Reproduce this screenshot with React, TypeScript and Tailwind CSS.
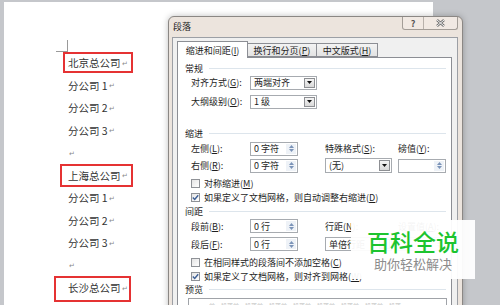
import type { ReactNode } from "react";

const docLines: { t: string; box?: string }[] = [
    { t: "北京总公司", box: "left-[59px] top-0 h-[21px] w-[70px]" },
    { t: "分公司 1" },
    { t: "分公司 2" },
    { t: "分公司 3" },
    { t: "" },
    { t: "上海总公司", box: "left-[56px] top-[-1px] h-[23px] w-[73px]" },
    { t: "分公司 1" },
    { t: "分公司 2" },
    { t: "分公司 3" },
    { t: "" },
    { t: "长沙总公司", box: "left-[50px] top-[-1px] h-[26px] w-[77px]" },
];

const M = ({ k }: { k: string }) => (
    <span>
        (<span className="underline">{k}</span>)
    </span>
);

const Arrow = () => (
    <svg width="5" height="3" viewBox="0 0 5 3">
        <path d="M0 0h5L2.5 3z" fill="#111" />
    </svg>
);

const Combo = ({ text, w = "w-[67px]", h = "h-[14px]" }: { text: string; w?: string; h?: string }) => (
    <div className={`flex ${w} ${h} items-stretch border border-[#a7abb0] bg-white`}>
        <div className="flex flex-1 items-center overflow-hidden whitespace-nowrap pl-[3px]">{text}</div>
        <div className="m-px flex w-[11px] items-center justify-center border border-[#8d8f93] bg-gradient-to-b from-[#f4f4f4] to-[#d9d9d9]">
            <Arrow />
        </div>
    </div>
);

const Spin = ({ text }: { text: string }) => (
    <div className="flex h-[14px] w-[48px] items-stretch border border-[#a7abb0] bg-white">
        <div className="flex flex-1 items-center whitespace-nowrap pl-[3px]">{text}</div>
        <div className="m-px flex w-[10px] flex-col items-center justify-center gap-px bg-[#eef2f7]">
            <svg width="5" height="3" viewBox="0 0 5 3">
                <path d="M0 3h5L2.5 0z" fill="#7b93b8" />
            </svg>
            <svg width="5" height="3" viewBox="0 0 5 3">
                <path d="M0 0h5L2.5 3z" fill="#7b93b8" />
            </svg>
        </div>
    </div>
);

const Check = ({ on, children }: { on?: boolean; children: ReactNode }) => (
    <div className="flex h-[14px] items-center gap-[4px] whitespace-nowrap pl-[6px]">
        <div className="flex h-[9px] w-[9px] items-center justify-center border border-[#8f9297] bg-gradient-to-br from-[#e4e4e4] to-white">
            {on && (
                <svg width="7" height="7" viewBox="0 0 7 7">
                    <path d="M0.8 3.6 2.7 5.5 6.2 1.2" stroke="#3d5f96" strokeWidth="1.4" fill="none" />
                </svg>
            )}
        </div>
        <span>{children}</span>
    </div>
);

const Heading = ({ text, h = "h-[14px]" }: { text: string; h?: string }) => (
    <div className={`flex ${h} items-center gap-[6px] pr-[5px]`}>
        <span>{text}</span>
        <div className="h-px flex-1 bg-[#dde5ec]" />
    </div>
);

const Dialog = () => (
    <div className="absolute left-[168px] top-[16px] flex h-[300px] w-[295px] flex-col rounded-t-[6px] border border-[#8b8784] bg-[#ece4dd] shadow-[0_0_6px_rgba(0,0,0,0.25)]">
        <div className="flex h-[20px] items-start justify-between pl-[4px] pr-[4px]">
            <span className="mt-[5px] text-[9px] text-[#222]">段落</span>
            <div className="flex h-[13px] rounded-b-[3px] border border-t-0 border-[#a39d97] bg-[#f1e9e3]">
                <div className="flex w-[21px] items-center justify-center border-r border-[#b8b1ab] text-[9px] font-bold text-[#555]">
                    ?
                </div>
                <div className="flex w-[33px] items-center justify-center">
                    <svg width="9" height="8" viewBox="0 0 9 8">
                        <path d="M1 1l7 6M8 1 1 7" stroke="#6d6d6d" strokeWidth="2.4" />
                        <path d="M1 1l7 6M8 1 1 7" stroke="#f4f4f4" strokeWidth="1" />
                    </svg>
                </div>
            </div>
        </div>
        <div className="ml-[3px] mr-[4px] flex flex-1 flex-col border border-[#9c9fa5] bg-[#f0f0f0] pl-[4px] pr-[5px] pt-[3px]">
            <div className="flex h-[16px] items-end">
                <div className="relative z-10 -mb-px flex h-[17px] w-[71px] items-center justify-center border border-b-0 border-[#8c8e94] bg-white">
                    缩进和间距<M k="I" />
                </div>
                <div className="flex h-[14px] w-[69px] items-center justify-center border border-l-0 border-[#8c8e94] bg-gradient-to-b from-[#f3f3f3] to-[#e3e3e3]">
                    换行和分页<M k="P" />
                </div>
                <div className="flex h-[14px] w-[61px] items-center justify-center border border-l-0 border-[#8c8e94] bg-gradient-to-b from-[#f3f3f3] to-[#e3e3e3]">
                    中文版式<M k="H" />
                </div>
            </div>
            <div className="flex flex-1 flex-col border border-[#8c8e94] bg-white pl-[7px] pt-[3px]">
                <Heading text="常规" />
                <div className="flex h-[15px] items-center pl-[6px]">
                    <span className="w-[59px]">
                        对齐方式<M k="G" />:
                    </span>
                    <Combo text="两端对齐" />
                </div>
                <div className="mt-[4px] flex h-[15px] items-center pl-[6px]">
                    <span className="w-[59px]">
                        大纲级别<M k="O" />:
                    </span>
                    <Combo text="1 级" />
                </div>
                <div className="mt-[17px]">
                    <Heading text="缩进" />
                </div>
                <div className="grid grid-cols-[59px_75px_73px_1fr] grid-rows-[17px_17px] items-center pl-[6px]">
                    <span>
                        左侧<M k="L" />:
                    </span>
                    <Spin text="0 字符" />
                    <span>
                        特殊格式<M k="S" />:
                    </span>
                    <span>
                        磅值<M k="Y" />:
                    </span>
                    <span>
                        右侧<M k="R" />:
                    </span>
                    <Spin text="0 字符" />
                    <Combo text="(无)" h="h-[15px]" />
                    <Spin text="" />
                </div>
                <div className="mt-[2px]">
                    <Check>
                        对称缩进<M k="M" />
                    </Check>
                    <Check on>
                        如果定义了文档网格，则自动调整右缩进<M k="D" />
                    </Check>
                </div>
                <div className="mt-[1px]">
                    <Heading text="间距" h="h-[12px]" />
                </div>
                <div className="grid grid-cols-[59px_75px_73px_1fr] grid-rows-[18px_18px] items-center pl-[6px]">
                    <span>
                        段前<M k="B" />:
                    </span>
                    <Spin text="0 行" />
                    <span>
                        行距<M k="N" />:
                    </span>
                    <span>
                        设置值<M k="A" />:
                    </span>
                    <span>
                        段后<M k="F" />:
                    </span>
                    <Spin text="0 行" />
                    <Combo text="单倍行距" />
                    <Spin text="" />
                </div>
                <div className="mt-[2px]">
                    <Check>
                        在相同样式的段落间不添加空格<M k="C" />
                    </Check>
                    <Check on>
                        如果定义了文档网格，则对齐到网格<M k="W" />
                    </Check>
                </div>
                <Heading text="预览" h="h-[12px]" />
                <div className="ml-[3px] mr-[4px] mt-[3px] flex-1 border border-[#a0a3a8] bg-white px-[20px] pt-[4px]">
                    <div className="overflow-hidden whitespace-nowrap text-[6px] leading-none text-[#c4c4c4]">
                        前一段落前一段落前一段落前一段落前一段落前一段落前一段落前一段落
                    </div>
                </div>
            </div>
        </div>
    </div>
);

export default function App() {
    return (
        <div className="relative h-[305px] w-[500px] overflow-hidden bg-[#c5c7cb] font-['Noto_Sans_CJK_SC',sans-serif] text-[9px] leading-none text-[#1e1e1e]">
            <div className="ml-[4px] mt-[2px] h-[303px] w-[429px] bg-white">
                <div className="ml-[52px] h-[12px] w-[12px] translate-y-[38px] border-b border-r border-[#9a9a9a]" />
                <div className="pt-[38px]">
                    {docLines.map((l, i) => (
                        <div key={i} className="relative flex h-[22.5px] items-center pl-[64px] text-[10.5px] text-[#333]">
                            {l.box && <div className={`absolute border-2 border-[#e53233] ${l.box}`} />}
                            <span>{l.t}</span>
                            <span className="ml-px text-[7px] text-[#8a8a8a]">↵</span>
                        </div>
                    ))}
                </div>
            </div>
            <Dialog />
            <div className="absolute left-[351px] top-[220px] flex h-[59px] w-[124px] flex-col items-center justify-center bg-white/95">
                <div className="text-[23px] font-medium leading-none text-[#1dc42f]">百科全说</div>
                <div className="mt-[4px] text-[13px] leading-none text-[#8c8c8c]">助你轻松解决</div>
            </div>
        </div>
    );
}
